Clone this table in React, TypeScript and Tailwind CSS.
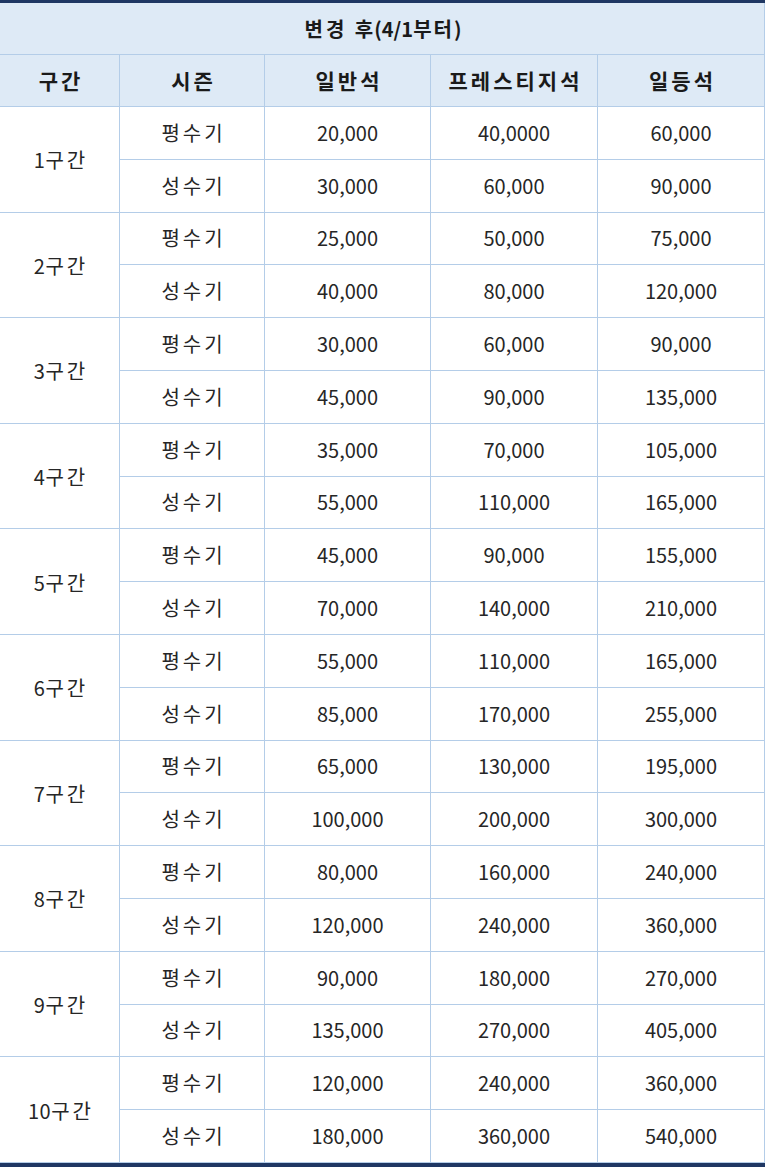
const rows: [string, string[], string[]][] = [
  ['1', ['20,000', '40,0000', '60,000'], ['30,000', '60,000', '90,000']],
  ['2', ['25,000', '50,000', '75,000'], ['40,000', '80,000', '120,000']],
  ['3', ['30,000', '60,000', '90,000'], ['45,000', '90,000', '135,000']],
  ['4', ['35,000', '70,000', '105,000'], ['55,000', '110,000', '165,000']],
  ['5', ['45,000', '90,000', '155,000'], ['70,000', '140,000', '210,000']],
  ['6', ['55,000', '110,000', '165,000'], ['85,000', '170,000', '255,000']],
  ['7', ['65,000', '130,000', '195,000'], ['100,000', '200,000', '300,000']],
  ['8', ['80,000', '160,000', '240,000'], ['120,000', '240,000', '360,000']],
  ['9', ['90,000', '180,000', '270,000'], ['135,000', '270,000', '405,000']],
  ['10', ['120,000', '240,000', '360,000'], ['180,000', '360,000', '540,000']],
];

const headers = ['구간', '시즌', '일반석', '프레스티지석', '일등석'];

const cell = 'flex items-center justify-center border-b border-r border-[#b4cde8]';
const hangul = 'tracking-[3px] pl-[3px]';

export default function App() {
  return (
    <div className="bg-white w-[768px] h-[1167px]" style={{ fontFamily: '"Noto Sans CJK KR", "Noto Sans", sans-serif' }}>
      <div className="w-[765px] border-t-[3px] border-b-[4px] border-[#1f3763]">
        <div
          className="grid text-[20px] text-[#262626]"
          style={{ gridTemplateColumns: '120px 145px 166px 167px 167px', gridTemplateRows: '52px 52px repeat(20, 52.8px)' }}
        >
          <div className={`${cell} col-span-5 bg-[#deeaf6] font-bold text-[20px] text-[#1a1a1a] pl-[2px]`}>
            <span className="tracking-[3px] -mr-[2px]">변경 후</span>
            <span>(4/1</span>
            <span className="tracking-[2px]">부터</span>
            <span>)</span>
          </div>
          {headers.map((h) => (
            <div key={h} className={`${cell} bg-[#deeaf6] font-bold text-[21px] text-[#1a1a1a] tracking-[3px] pl-[3px]`}>
              {h}
            </div>
          ))}
          {rows.map(([zone, low, high], i) => (
            <div key={zone} className="contents">
              <div className={`${cell} pl-[3px] pt-[2px]`} style={{ gridRow: `${3 + i * 2} / span 2` }}>
                <span className="tracking-[0.5px]">{zone}</span>
                <span className="tracking-[3px]">구간</span>
              </div>
              <div className={`${cell} ${hangul}`}>평수기</div>
              {low.map((v, j) => (
                <div key={j} className={cell}>{v}</div>
              ))}
              <div className={`${cell} ${hangul}`}>성수기</div>
              {high.map((v, j) => (
                <div key={j} className={cell}>{v}</div>
              ))}
            </div>
          ))}
        </div>
      </div>
    </div>
  );
}
